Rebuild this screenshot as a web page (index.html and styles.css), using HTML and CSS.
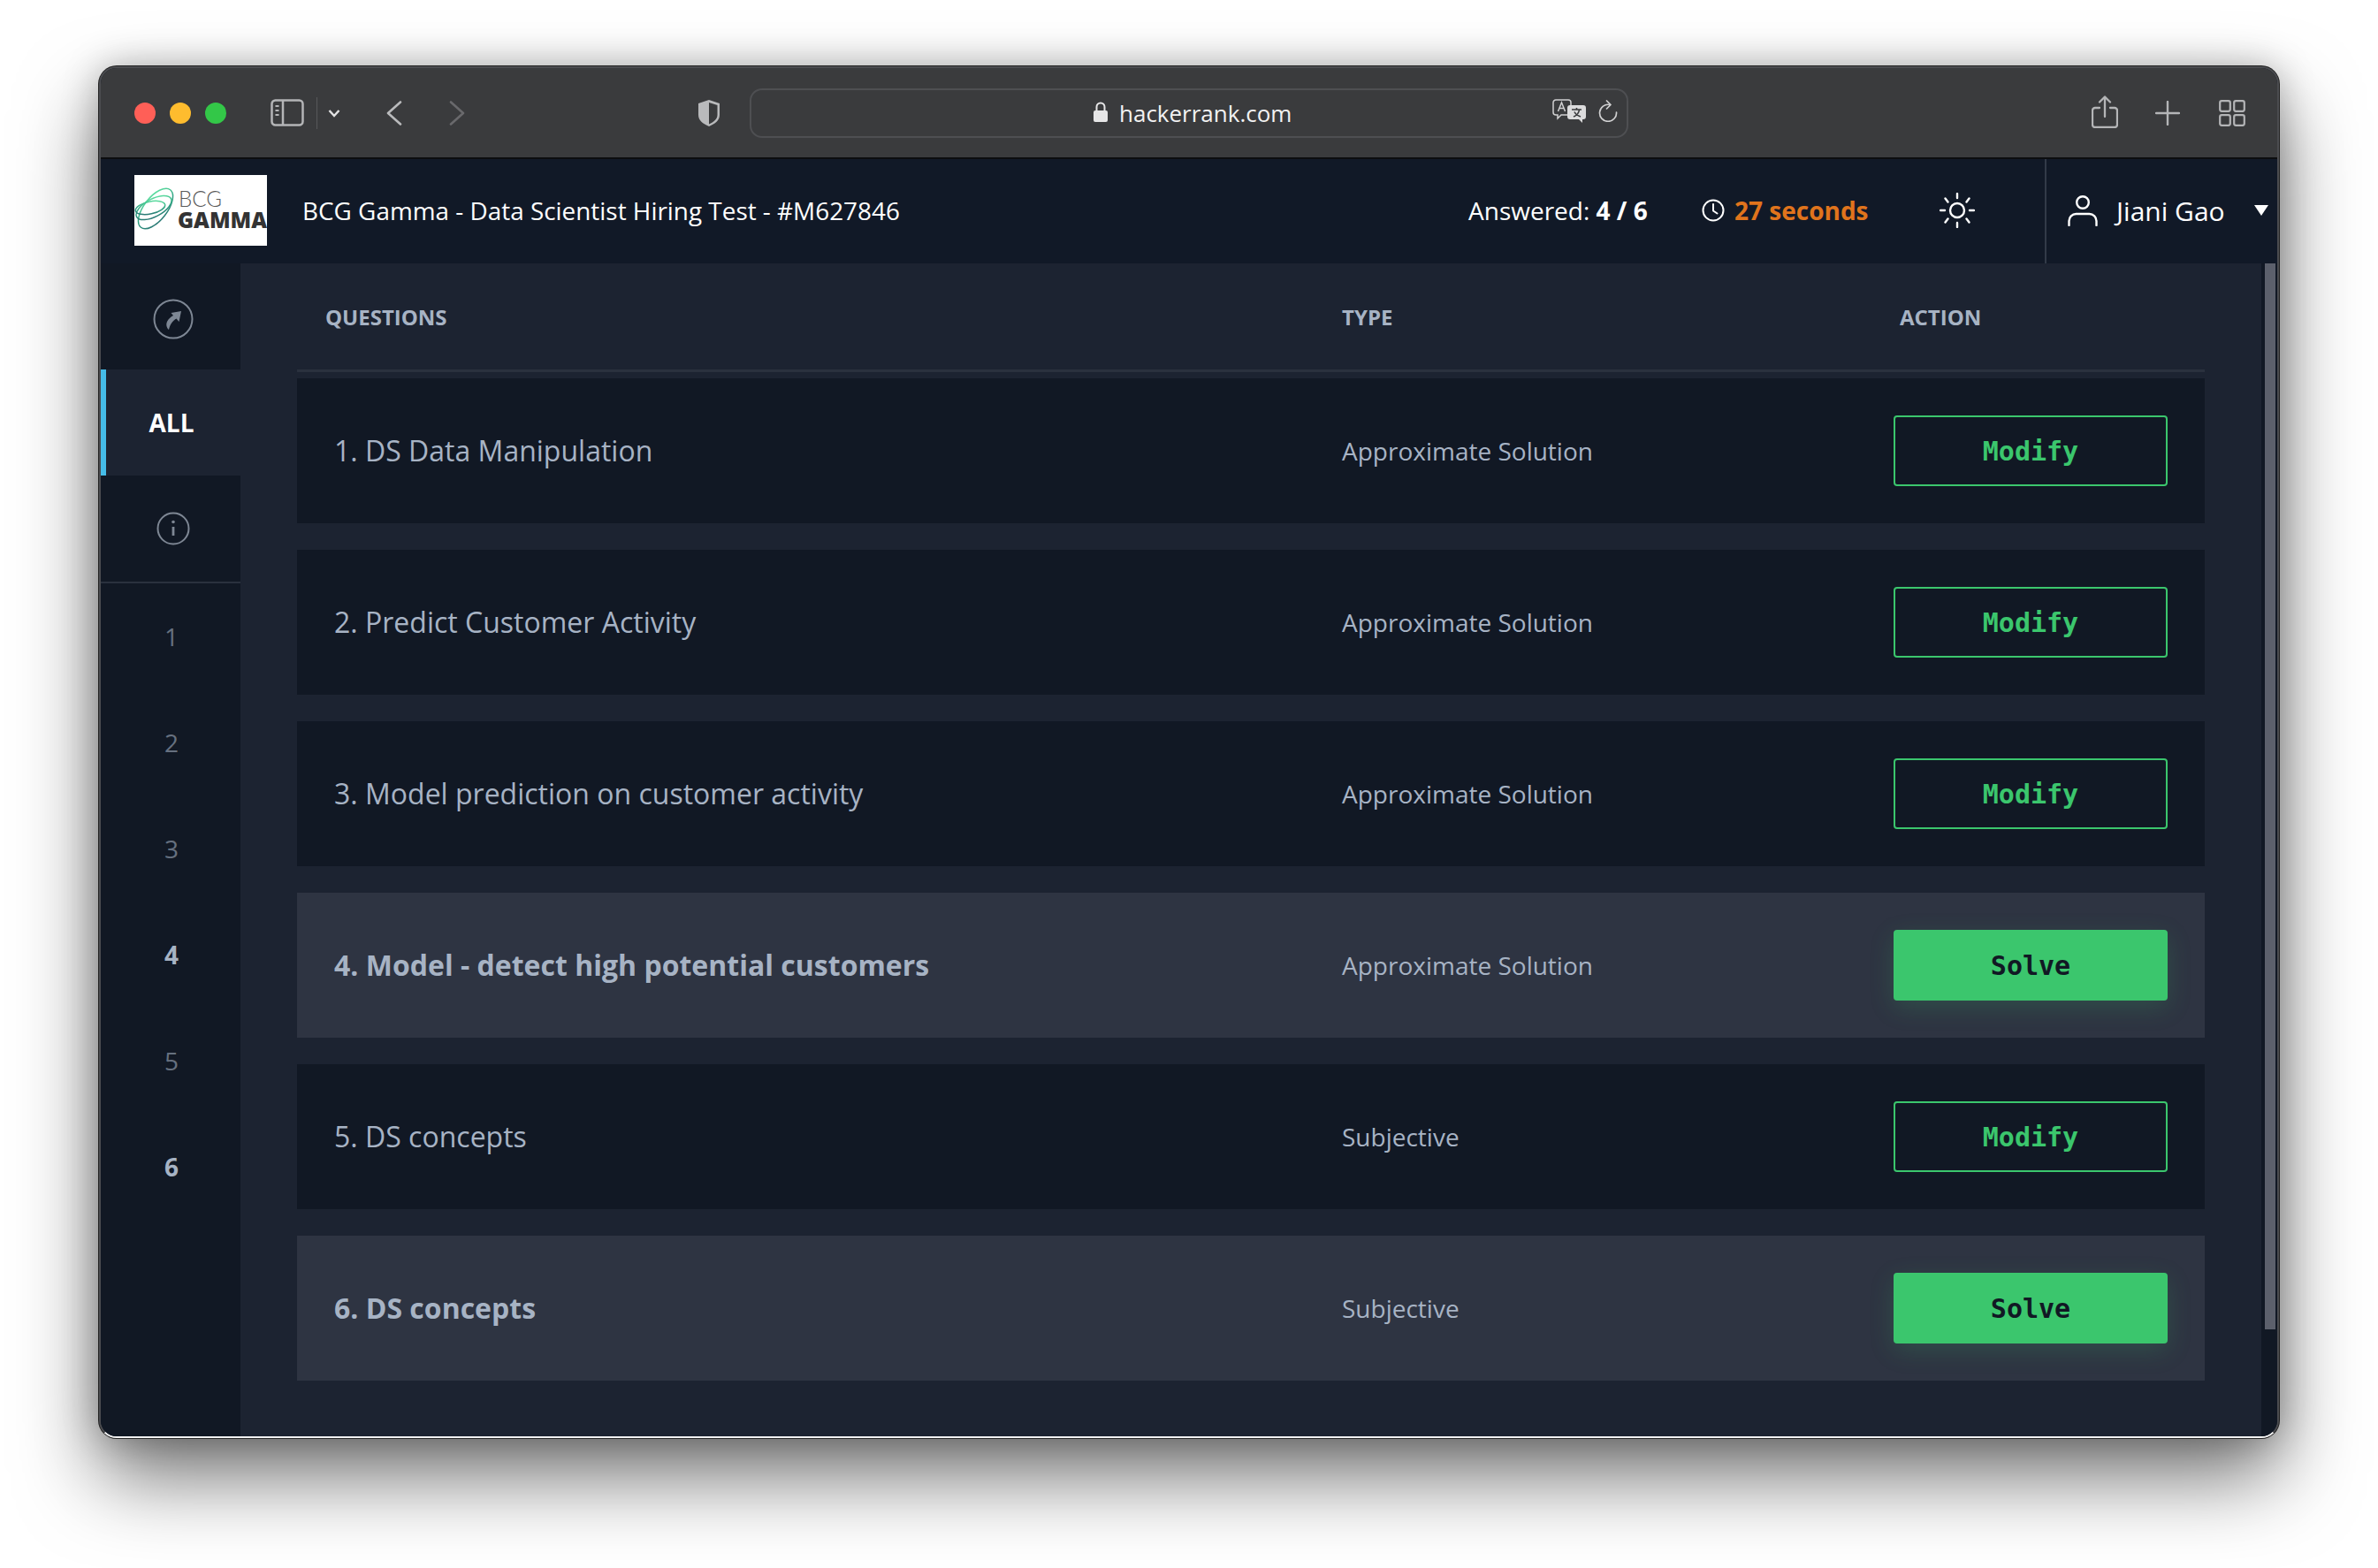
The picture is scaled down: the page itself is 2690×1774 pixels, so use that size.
FILE: index.html
```html
<!DOCTYPE html>
<html lang="en">
<head>
  <meta charset="UTF-8">
  <title>BCG Gamma - Data Scientist Hiring Test</title>
  <link rel="stylesheet" href="styles.css">
</head>
<body>
  <div class="window">
    <div class="toolbar">
      <span class="dot red"></span>
      <span class="dot yellow"></span>
      <span class="dot green"></span>

      <svg class="tb-sidebar" width="38" height="31" viewBox="0 0 38 31" fill="none" stroke="#b4b5b7" stroke-width="2.5">
        <rect x="1.5" y="1.5" width="35" height="28" rx="4"/>
        <path d="M14 1.5v28"/>
        <path d="M5.5 8h4M5.5 13h4M5.5 18h4" stroke-width="2"/>
      </svg>
      <span class="tb-sep"></span>
      <svg class="tb-caret" width="14" height="10" viewBox="0 0 14 10" fill="none" stroke="#e2e2e3" stroke-width="2.5">
        <path d="M1.5 2l5.5 6 5.5-6"/>
      </svg>
      <svg class="tb-back" width="18" height="28" viewBox="0 0 18 28" fill="none" stroke="#b9babc" stroke-width="2.6" stroke-linecap="round" stroke-linejoin="round">
        <path d="M16 1.5L2 14l14 12.5"/>
      </svg>
      <svg class="tb-forward" width="18" height="28" viewBox="0 0 18 28" fill="none" stroke="#69696c" stroke-width="2.6" stroke-linecap="round" stroke-linejoin="round">
        <path d="M2 1.5L16 14 2 26.5"/>
      </svg>
      <svg class="tb-shield" width="26" height="32" viewBox="0 0 26 32">
        <path d="M13 1L25 5v13c0 6-5 10-12 13C6 28 1 24 1 18V5z" fill="#b9babc"/>
        <path d="M13 4l9.500 3v11c0 4.500-4 8-9.500 10.500z" fill="#3a3b3d"/>
      </svg>

      <div class="urlbar">
        <svg class="url-lock" width="18" height="23" viewBox="0 0 18 23" fill="none">
          <rect x="1" y="10" width="16" height="13" rx="2" fill="#e6e6e7"/>
          <path d="M4.500 10V6a4.500 4.500 0 0 1 9 0v4" stroke="#e6e6e7" stroke-width="2"/>
        </svg>
        <span class="url-text">hackerrank.com</span>
        <svg class="url-translate" width="38" height="27" viewBox="0 0 38 27">
          <path d="M4 1h14a3 3 0 0 1 3 3v11a3 3 0 0 1-3 3h-8l-4 4v-4H4a3 3 0 0 1-3-3V4a3 3 0 0 1 3-3z" fill="#3a3b3d" stroke="#d0d0d1" stroke-width="1.500"/>
          <path d="M6.500 14L10.500 4l4 10M8 10.500h5" fill="none" stroke="#d0d0d1" stroke-width="1.500"/>
          <path d="M20 7h15a3 3 0 0 1 3 3v10a3 3 0 0 1-3 3h-1v4l-4-4h-10a3 3 0 0 1-3-3V10a3 3 0 0 1 3-3z" fill="#dcdcdd"/>
          <path d="M22 12h11M27.500 10v2M24 20c4-1.500 6-4 6.500-8M25 14.500c1 2.500 4 4.500 7 5.500" fill="none" stroke="#3a3b3d" stroke-width="1.600"/>
        </svg>
        <svg class="url-reload" width="22" height="25" viewBox="0 0 22 25" fill="none" stroke="#d0d0d1" stroke-width="1.700" stroke-linecap="round" stroke-linejoin="round">
          <path d="M13 5.500a9.500 9.500 0 1 0 7.500 8.500"/>
          <path d="M9.500 1L14 5.500 9.500 10"/>
        </svg>
      </div>

      <svg class="tb-share" width="30" height="37" viewBox="0 0 30 37" fill="none" stroke="#b4b5b7" stroke-width="2.300" stroke-linecap="round" stroke-linejoin="round">
        <path d="M9 14H4a3 3 0 0 0-3 3v16a3 3 0 0 0 3 3h22a3 3 0 0 0 3-3V17a3 3 0 0 0-3-3h-5"/>
        <path d="M15 24V2M9 7.500L15 1.500l6 6"/>
      </svg>
      <svg class="tb-plus" width="28" height="28" viewBox="0 0 28 28" stroke="#b4b5b7" stroke-width="2.400" stroke-linecap="round">
        <path d="M14 1v26M1 14h26"/>
      </svg>
      <svg class="tb-tabs" width="30" height="30" viewBox="0 0 30 30" fill="none" stroke="#b4b5b7" stroke-width="2.200">
        <rect x="1.200" y="1.200" width="11.600" height="11.600" rx="2"/>
        <rect x="17.200" y="1.200" width="11.600" height="11.600" rx="2"/>
        <rect x="1.200" y="17.200" width="11.600" height="11.600" rx="2"/>
        <rect x="17.200" y="17.200" width="11.600" height="11.600" rx="2"/>
      </svg>
    </div>

    <header class="topbar">
      <svg class="logo" width="150" height="80" viewBox="0 0 150 80">
        <defs>
          <linearGradient id="loops" x1="0.800" y1="0" x2="0.200" y2="1">
            <stop offset="0" stop-color="#62e3a3"/>
            <stop offset="0.500" stop-color="#2fa382"/>
            <stop offset="1" stop-color="#2b7474"/>
          </linearGradient>
        </defs>
        <rect width="150" height="80" fill="#fff"/>
        <g fill="none" stroke="url(#loops)" stroke-width="1.500">
          <ellipse cx="24" cy="38" rx="27" ry="13" transform="rotate(-52 24 38)"/>
          <ellipse cx="22" cy="37" rx="22" ry="10" transform="rotate(-28 22 37)"/>
          <ellipse cx="18" cy="37" rx="17" ry="7" transform="rotate(-12 18 37)"/>
        </g>
        <text class="logo-bcg" x="50" y="36" textLength="49" lengthAdjust="spacingAndGlyphs">BCG</text>
        <text class="logo-gamma" x="49" y="60" textLength="101" lengthAdjust="spacingAndGlyphs">GAMMA</text>
      </svg>
      <div class="test-title">BCG Gamma - Data Scientist Hiring Test - #M627846</div>
      <div class="answered">Answered: <b>4 / 6</b></div>
      <svg class="clock" width="26" height="26" viewBox="0 0 26 26" fill="none" stroke="#fff" stroke-width="2" stroke-linecap="round" stroke-linejoin="round">
        <circle cx="13" cy="13" r="11.500"/>
        <path d="M13 6v7.500l4.500 3"/>
      </svg>
      <div class="timer">27 seconds</div>
      <svg class="sun" width="40" height="40" viewBox="0 0 40 40" fill="none" stroke="#fff" stroke-width="2.400" stroke-linecap="round">
        <circle cx="20" cy="20" r="8"/>
        <path d="M20 1v5M20 34v5M1 20h5M34 20h5M6.500 6.500l3 4M33.500 6.500l-3 4M6.500 33.500l3-4M33.500 33.500l-3-4"/>
      </svg>
      <div class="user">
        <svg width="34" height="35" viewBox="0 0 34 35" fill="none" stroke="#fff" stroke-width="2.400" stroke-linecap="round">
          <circle cx="17" cy="8" r="6.800"/>
          <path d="M1.500 34v-5a8 8 0 0 1 8-8h15a8 8 0 0 1 8 8v5"/>
        </svg>
        <span class="user-name">Jiani Gao</span>
        <span class="user-caret"></span>
      </div>
    </header>

    <div class="body">
      <nav class="sidenav">
        <div class="nav-item nav-compass">
          <svg width="46" height="46" viewBox="0 0 46 46" fill="none">
            <circle cx="23" cy="23" r="21.500" stroke="#7e8794" stroke-width="2"/>
            <path d="M32 14L29.500 26 26.500 22.500C22 25 19.500 29 18 35 15.500 33 14.500 29 16 26 17.500 23 20 20.500 23 19L20.500 16z" fill="#7e8794"/>
          </svg>
        </div>
        <div class="nav-item nav-all">ALL</div>
        <div class="nav-item nav-info">
          <svg width="38" height="38" viewBox="0 0 38 38" fill="none">
            <circle cx="19" cy="19" r="17.500" stroke="#7e8794" stroke-width="2"/>
            <circle cx="19" cy="11.500" r="1.800" fill="#7e8794"/>
            <path d="M19 17v10" stroke="#7e8794" stroke-width="2.800"/>
          </svg>
        </div>
        <div class="nav-item nav-num">1</div>
        <div class="nav-item nav-num">2</div>
        <div class="nav-item nav-num">3</div>
        <div class="nav-item nav-num nav-todo">4</div>
        <div class="nav-item nav-num">5</div>
        <div class="nav-item nav-num nav-todo">6</div>
      </nav>

      <main class="content">
        <div class="table-head">
          <span>QUESTIONS</span>
          <span>TYPE</span>
          <span>ACTION</span>
        </div>

        <div class="row">
          <div class="row-title">1. DS Data Manipulation</div>
          <div class="row-type">Approximate Solution</div>
          <button class="btn btn-modify">Modify</button>
        </div>
        <div class="row">
          <div class="row-title">2. Predict Customer Activity</div>
          <div class="row-type">Approximate Solution</div>
          <button class="btn btn-modify">Modify</button>
        </div>
        <div class="row">
          <div class="row-title">3. Model prediction on customer activity</div>
          <div class="row-type">Approximate Solution</div>
          <button class="btn btn-modify">Modify</button>
        </div>
        <div class="row row-todo">
          <div class="row-title">4. Model - detect high potential customers</div>
          <div class="row-type">Approximate Solution</div>
          <button class="btn btn-solve">Solve</button>
        </div>
        <div class="row">
          <div class="row-title">5. DS concepts</div>
          <div class="row-type">Subjective</div>
          <button class="btn btn-modify">Modify</button>
        </div>
        <div class="row row-todo">
          <div class="row-title">6. DS concepts</div>
          <div class="row-type">Subjective</div>
          <button class="btn btn-solve">Solve</button>
        </div>
      </main>

      <div class="scrolltrack"><div class="scrollthumb"></div></div>
    </div>
  </div>
</body>
</html>
```

FILE: styles.css
```css
* {
  box-sizing: border-box;
}

html,
body {
  margin: 0;
  height: 1774px;
  overflow: hidden;
}

body {
  padding: 75px 112px 0 112px;
  background: #fff;
  font-family: "Open Sans", sans-serif;
}

.window {
  height: 1552px;
  border-radius: 20px;
  overflow: hidden;
  display: flex;
  flex-direction: column;
  background: #111824;
  box-shadow: 0 0 0 1px #222, 0 44px 90px rgba(0, 0, 0, 0.55), 0 0 40px rgba(0, 0, 0, 0.25);
  border: 2px solid #4b4c50;
  border-bottom: 2px solid #f2f2f2;
}

/* browser chrome */
.toolbar {
  height: 103px;
  flex: none;
  display: flex;
  align-items: center;
  background: #3a3b3d;
  border-bottom: 2px solid #0c0d0f;
  padding-left: 38px;
  padding-top: 2px;
}

.dot {
  width: 24px;
  height: 24px;
  border-radius: 50%;
  margin-right: 16px;
  margin-top: -2px;
}

.red { background: #ff5f57; }
.yellow { background: #febc2e; }
.green { background: #33c748; }

.tb-sidebar { margin-left: 34px; margin-top: -2px; }
.tb-sep { width: 1px; height: 36px; margin-left: 14px; background: #57585a; margin-top: -2px; }
.tb-caret { margin-left: 12px; margin-top: -2px; }
.tb-back { margin-left: 52px; margin-top: -2px; }
.tb-forward { margin-left: 53px; margin-top: -2px; }
.tb-shield { margin-left: 263px; margin-top: -2px; }

.urlbar {
  width: 994px;
  height: 56px;
  margin-left: 33px;
  margin-top: -2px;
  border: 2px solid #4e4f52;
  border-radius: 14px;
  display: flex;
  align-items: center;
  padding-left: 386px;
  color: #fff;
}

.url-lock { margin-top: -2px; }

.url-text {
  margin-left: 12px;
  font-size: 26px;
  font-family: "Open Sans", sans-serif;
  color: #f2f2f2;
}

.url-translate { margin-left: 295px; margin-top: -4px; }
.url-reload { margin-left: 14px; margin-top: -4px; }

.tb-share { margin-left: 524px; margin-top: -4px; }
.tb-plus { margin-left: 42px; margin-top: -2px; }
.tb-tabs { margin-left: 44px; margin-top: -2px; }

/* test header */
.topbar {
  height: 118px;
  flex: none;
  display: flex;
  align-items: center;
  background: #111927;
  color: #fff;
  padding-left: 38px;
  padding-bottom: 2px;
}

.logo {
  flex: none;
}

.logo-bcg {
  font-family: "Lato", sans-serif;
  font-weight: 300;
  font-size: 26px;
  fill: #5a5a5a;
}

.logo-gamma {
  font-family: "Open Sans", sans-serif;
  font-weight: 800;
  font-size: 24px;
  fill: #333;
}

.test-title {
  margin-left: 40px;
  font-size: 27.9px;
  width: 1319px;
}

.answered {
  font-size: 28px;
  width: 264px;
}

.answered b {
  font-weight: 700;
}

.clock {
  flex: none;
}

.timer {
  margin-left: 11px;
  width: 232px;
  font-size: 28px;
  font-weight: 700;
  color: #e0741c;
}

.sun {
  flex: none;
}

.user {
  margin-left: 79px;
  height: 118px;
  align-self: flex-start;
  flex: 1;
  display: flex;
  align-items: center;
  padding-left: 24px;
  padding-bottom: 2px;
  border-left: 2px solid #323a48;
}

.user-name {
  margin-left: 21px;
  font-size: 30px;
}

.user-caret {
  margin-left: 33px;
  width: 0;
  height: 0;
  border-left: 8px solid transparent;
  border-right: 8px solid transparent;
  border-top: 12px solid #fff;
}

/* page body */
.body {
  flex: 1;
  display: flex;
  min-height: 0;
}

.sidenav {
  width: 158px;
  flex: none;
  background: #111824;
  display: flex;
  flex-direction: column;
}

.nav-item {
  height: 120px;
  display: flex;
  align-items: center;
  justify-content: center;
  color: #66707f;
  font-size: 28px;
}

.nav-item svg {
  margin-left: 6px;
}

.nav-compass svg {
  margin-top: 6px;
}

.nav-all {
  background: #1c2331;
  border-left: 6px solid #45bce8;
  padding-right: 4px;
  color: #fff;
  font-weight: 700;
  font-size: 28px;
}

.nav-info {
  height: 122px;
  border-bottom: 2px solid #2a313e;
}

.nav-num {
  padding-left: 2px;
}

.nav-todo {
  color: #a7b3c4;
  font-weight: 700;
}

.content {
  flex: 1;
  background: #1c2331;
  padding: 0 64px;
}

.table-head {
  height: 123px;
  display: grid;
  grid-template-columns: 1150px 631px 1fr;
  align-items: center;
  border-bottom: 3px solid #2a313e;
  padding-left: 32px;
  margin-bottom: 7px;
  color: #a7b3c4;
  font-size: 24px;
  font-weight: 700;
}

.row {
  height: 164px;
  margin-bottom: 30px;
  display: grid;
  grid-template-columns: 1140px 624px 310px;
  align-items: center;
  padding: 0 42px;
  background: #111824;
  color: #a7b3c4;
}

.row-todo {
  background: #2e3442;
}

.row-title {
  font-size: 32px;
  padding-bottom: 2px;
}

.row-todo .row-title {
  font-weight: 700;
}

.row-type {
  font-size: 28px;
}

.btn {
  height: 80px;
  border-radius: 4px;
  font-family: "DejaVu Sans Mono", "Liberation Mono", monospace;
  font-size: 30px;
  font-weight: 700;
  cursor: pointer;
}

.btn-modify {
  background: transparent;
  border: 2px solid #3bc66d;
  color: #3bc66d;
}

.btn-solve {
  background: #3bc66d;
  border: none;
  color: #111824;
  box-shadow: 0 8px 28px rgba(59, 198, 109, 0.18);
}

.scrolltrack {
  width: 18px;
  flex: none;
  background: #111824;
  padding-left: 4px;
}

.scrollthumb {
  width: 12px;
  height: 1206px;
  background: #5c606c;
}
```
